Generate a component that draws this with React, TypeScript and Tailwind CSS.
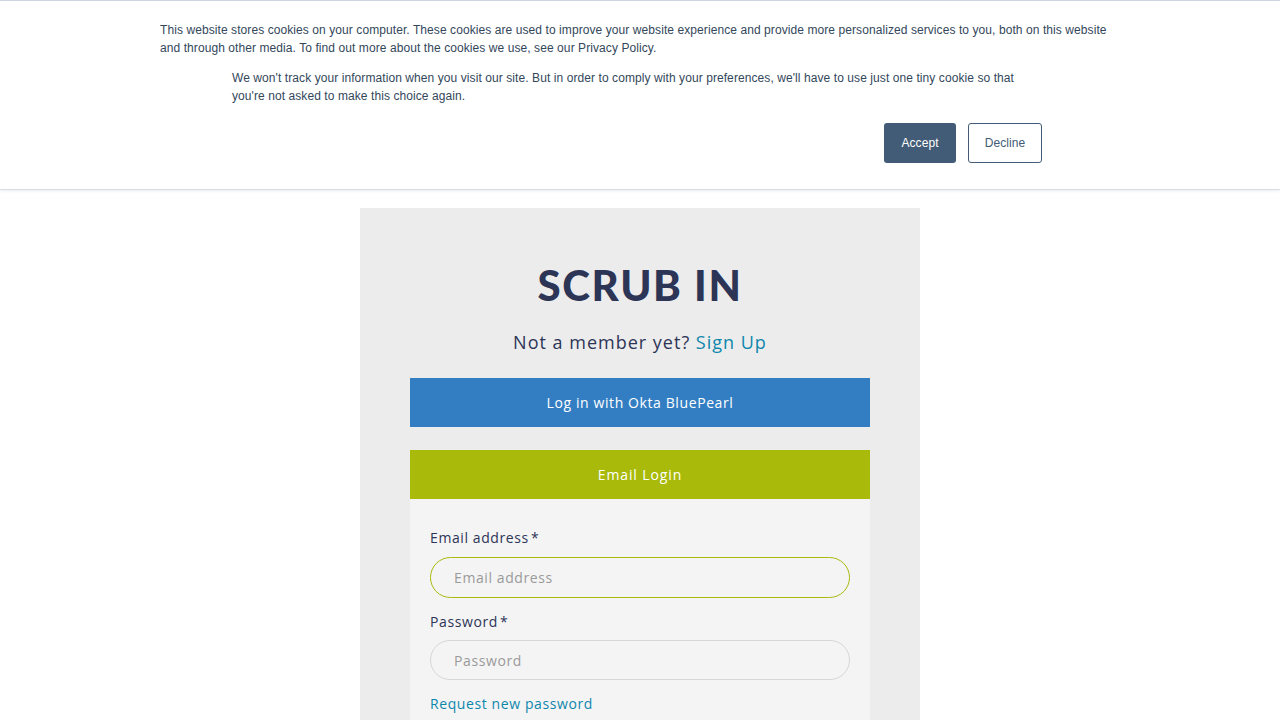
import React from 'react';

const sans = "font-['Open_Sans',Lato,sans-serif]";

export default function App() {
  return (
    <div className="min-h-[720px] bg-white">
      {/* Cookie banner */}
      <div className="border-t border-t-[#cbd6e2] border-b border-b-[#d6dde4] shadow-[0_1px_3px_rgba(0,0,0,0.08)] bg-white font-['Liberation_Sans',Arial,sans-serif] text-[12px] leading-[18px] tracking-[0.08px] text-[#33475b]">
        <div className="w-[960px] mx-auto pt-[20px] pb-[26px]">
          <p className="pr-[4px]">
            This website stores cookies on your computer. These cookies are used to improve your website experience and provide more personalized services to you, both on this website and through other media. To find out more about the cookies we use, see our Privacy Policy.
          </p>
          <div className="w-[816px] mx-auto mt-[12px]">
            <p className="pr-[24px]">
              We won't track your information when you visit our site. But in order to comply with your preferences, we'll have to use just one tiny cookie so that you're not asked to make this choice again.
            </p>
            <div className="flex justify-end gap-3 mt-[18px] pr-[6px]">
              <button className="w-[72px] h-[40px] rounded-[3px] bg-[#425b76] text-white">Accept</button>
              <button className="w-[74px] h-[40px] rounded-[3px] border border-[#425b76] text-[#425b76] bg-white">Decline</button>
            </div>
          </div>
        </div>
      </div>

      {/* Login card */}
      <div className={`w-[560px] mx-auto mt-[18px] bg-[#ececec] px-[50px] pt-[52px] ${sans}`}>
        <h1 className="text-center font-['Lato',sans-serif] font-black text-[42px] leading-[50px] tracking-[1.6px] text-[#2d3557]">SCRUB IN</h1>
        <p className="text-center text-[18px] leading-[26px] tracking-[1px] mt-[19px] text-[#2d3557]">
          Not a member yet? <a className="text-[#0e87ad]">Sign Up</a>
        </p>
        <button className="mt-[23px] w-full h-[49px] bg-[#337ec2] text-white text-[14px] tracking-[0.6px]">Log in with Okta BluePearl</button>
        <button className="mt-[23px] w-full h-[49px] bg-[#a9ba0b] text-white text-[14px] tracking-[0.9px]">Email Login</button>
        <div className="bg-[#f4f4f4] px-[20px] pt-[29px] pb-[20px] text-[14px] tracking-[0.6px]">
          <label className="block leading-[20px] text-[#2d3557]">Email address<span className="ml-[2px]">*</span></label>
          <input
            placeholder="Email address"
            className="mt-[9px] w-full h-[41px] rounded-full border border-[#a9ba0b] bg-[#f4f4f4] px-[23px] placeholder-[#9a9a9a] outline-none"
          />
          <label className="block mt-[14px] leading-[20px] text-[#2d3557]">Password<span className="ml-[2px]">*</span></label>
          <input
            type="password"
            placeholder="Password"
            className="mt-[8px] w-full h-[40px] rounded-full border border-[#d6d6d6] bg-[#f4f4f4] px-[23px] placeholder-[#9a9a9a] outline-none"
          />
          <a className="block mt-[14px] leading-[20px] text-[#0e87ad]">Request new password</a>
        </div>
      </div>
    </div>
  );
}
